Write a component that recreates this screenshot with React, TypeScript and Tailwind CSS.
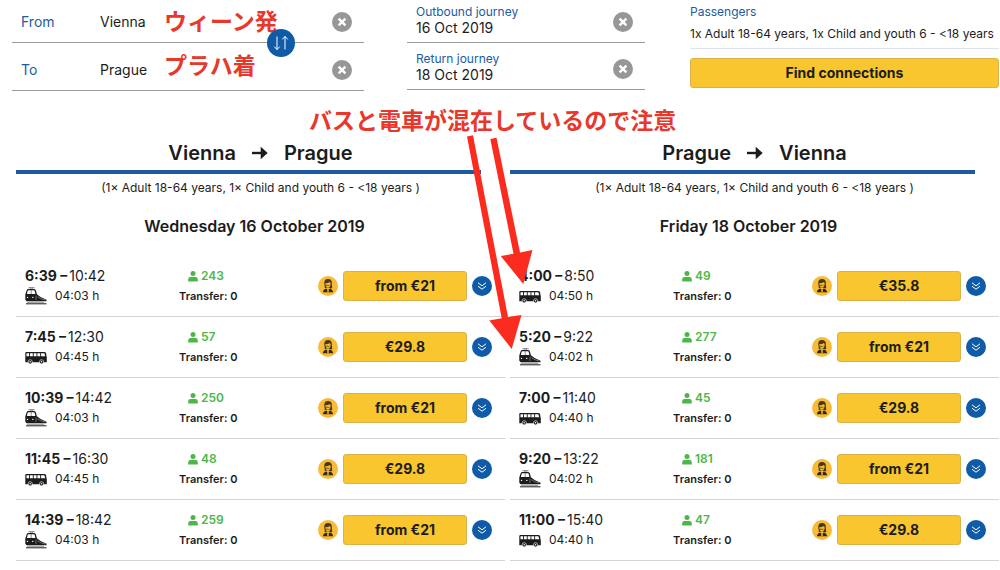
type Vehicle = 'train' | 'bus'

interface Connection {
  departure: string
  arrival: string
  duration: string
  vehicle: Vehicle
  seats: number
  price: string
}

interface Journey {
  from: string
  to: string
  date: string
  connections: Connection[]
}

const journeys: Journey[] = [
  {
    from: 'Vienna',
    to: 'Prague',
    date: 'Wednesday 16 October 2019',
    connections: [
      { departure: '6:39', arrival: '10:42', duration: '04:03 h', vehicle: 'train', seats: 243, price: 'from €21' },
      { departure: '7:45', arrival: '12:30', duration: '04:45 h', vehicle: 'bus', seats: 57, price: '€29.8' },
      { departure: '10:39', arrival: '14:42', duration: '04:03 h', vehicle: 'train', seats: 250, price: 'from €21' },
      { departure: '11:45', arrival: '16:30', duration: '04:45 h', vehicle: 'bus', seats: 48, price: '€29.8' },
      { departure: '14:39', arrival: '18:42', duration: '04:03 h', vehicle: 'train', seats: 259, price: 'from €21' },
    ],
  },
  {
    from: 'Prague',
    to: 'Vienna',
    date: 'Friday 18 October 2019',
    connections: [
      { departure: '4:00', arrival: '8:50', duration: '04:50 h', vehicle: 'bus', seats: 49, price: '€35.8' },
      { departure: '5:20', arrival: '9:22', duration: '04:02 h', vehicle: 'train', seats: 277, price: 'from €21' },
      { departure: '7:00', arrival: '11:40', duration: '04:40 h', vehicle: 'bus', seats: 45, price: '€29.8' },
      { departure: '9:20', arrival: '13:22', duration: '04:02 h', vehicle: 'train', seats: 181, price: 'from €21' },
      { departure: '11:00', arrival: '15:40', duration: '04:40 h', vehicle: 'bus', seats: 47, price: '€29.8' },
    ],
  },
]

function TrainIcon() {
  return (
    <svg viewBox="0 0 22 18" className="w-[22px] h-[18px]" aria-hidden="true">
      <path d="M3.500 .7h6M5 .7l1.500 1.300L8 .7" fill="none" stroke="#666" strokeWidth="0.800" />
      <path d="M3.400 2h5.800q1.300 0 1.700 1.500l1 3.700q3.500 3.400 9.600 5.600v1.400H1.600L.3 12.800V7.500L1.600 3.400Q2.100 2 3.400 2z" fill="#1c1c1c" />
      <path d="M3.300 3.200h5.600q.6 0 .8.800l.7 3H1.900l.7-3q.2-.8.7-.8z" fill="#fff" />
      <path d="M6.200 3.200v4" stroke="#1c1c1c" strokeWidth=".5" />
      <circle cx="2.500" cy="10.400" r=".7" fill="#fff" />
      <circle cx="7.800" cy="10.400" r=".7" fill="#fff" />
      <path d="M11 8.500v4.500M12.500 9.800q3.500 2.300 7.500 3.200" fill="none" stroke="#aaa" strokeWidth=".6" />
      <path d="M2 15.300h17" stroke="#777" strokeWidth=".8" />
      <path d="M1 16.800h20.500" stroke="#1c1c1c" strokeWidth="1" />
    </svg>
  )
}

function BusIcon() {
  return (
    <svg viewBox="0 0 22 18" className="w-[22px] h-[18px]" aria-hidden="true">
      <path d="M1.300 4h18.200q1.200 0 1.500 1.300l.8 4.300v4.700H.3V5.200Q.3 4 1.300 4z" fill="#1c1c1c" />
      <path d="M1.500 5.300h2.600v2.900H1.500zM5 5.300h2.800v2.900H5zM8.700 5.300h2.800v2.900H8.700zM12.400 5.300h2.800v2.900h-2.800zM16.100 5.300h3.300l.8 2.900h-4.100z" fill="#fff" />
      <circle cx="5.200" cy="13.800" r="2.100" fill="#1c1c1c" stroke="#fff" strokeWidth=".6" />
      <circle cx="16.600" cy="13.800" r="2.100" fill="#1c1c1c" stroke="#fff" strokeWidth=".6" />
      <circle cx="5.200" cy="13.800" r=".7" fill="#fff" />
      <circle cx="16.600" cy="13.800" r=".7" fill="#fff" />
    </svg>
  )
}

function PersonIcon() {
  return (
    <svg viewBox="0 0 10 11" className="w-[10px] h-[11px]" aria-hidden="true">
      <circle cx="5" cy="2.600" r="2.500" fill="#4cb748" />
      <path d="M.2 10.600V8.400Q.2 6 2.600 6h4.800q2.400 0 2.400 2.400v2.200z" fill="#4cb748" />
    </svg>
  )
}

function StewardIcon() {
  return (
    <svg viewBox="0 0 20 20" className="size-5 shrink-0" role="img" aria-label="Steward">
      <circle cx="10" cy="10" r="10" fill="#f8bb38" />
      <path d="M6.300 8.200Q5.700 3 10 3t3.800 4.600q.3 3 .4 4.600h-2l-1.500-.7H8.600l-1 .5H6.700Q7 10 6.300 8.200z" fill="#4a3a14" />
      <path d="M7.300 7.300q3 0 4.700-1.200.9 1 .6 2.600Q12 11.300 10 11.600 7.900 11.300 7.300 8.800z" fill="#f8bb38" />
      <path d="M7.200 9.200h2.200q1 .8 2-.1" fill="none" stroke="#4a3a14" strokeWidth=".8" />
      <path d="M4.900 16.300q.2-3 3.400-3.900L10 14.200l1.700-1.800q3.200.9 3.400 3.900z" fill="#33290f" />
      <path d="M9 13.400l1 1.200 1-1.200-.4 2.700h-1.200z" fill="#f8bb38" />
    </svg>
  )
}

function ClearButton({ label }: { label: string }) {
  return (
    <button type="button" aria-label={label} className="size-5 shrink-0 rounded-full bg-[#979797]">
      <svg viewBox="0 0 20 20" className="size-5" aria-hidden="true">
        <path d="M6.600 6.600l6.800 6.800M13.400 6.600l-6.800 6.800" stroke="#fff" strokeWidth="2.400" />
      </svg>
    </button>
  )
}

function RightArrow() {
  return (
    <svg viewBox="0 0 16 14" className="w-4 h-3.5" role="img" aria-label="to">
      <path d="M0 7h13" stroke="#1c1c1c" strokeWidth="2.400" />
      <path d="M8.700.8l7 6.200-7 6.200z" fill="#1c1c1c" />
    </svg>
  )
}

function ConnectionRow({ connection }: { connection: Connection }) {
  return (
    <li className="flex items-center h-[61px] pl-[9px] pr-[13px] border-b border-[#d4d4d4]">
      <div className="w-[154px] shrink-0">
        <p className="flex gap-0.5 text-sm leading-5">
          <span className="font-bold">{connection.departure} –</span>
          <span>{connection.arrival}</span>
        </p>
        <p className="flex items-center gap-2 text-xs leading-5">
          {connection.vehicle === 'train' ? <TrainIcon /> : <BusIcon />}
          {connection.duration}
        </p>
      </div>
      <div className="shrink-0">
        <p className="flex items-center gap-[3px] pl-[9px] text-xs leading-5 font-semibold text-[#4cb748]">
          <PersonIcon />
          {connection.seats}
        </p>
        <p className="text-[11px] leading-5 font-semibold">Transfer: 0</p>
      </div>
      <div className="ml-auto flex items-center gap-[5px]">
        <StewardIcon />
        <button type="button" className="w-[124px] h-[30px] rounded-[3px] border border-[#d9b24a] bg-[#f9c62f] text-sm font-bold">
          {connection.price}
        </button>
        <button type="button" aria-label="Show details" className="size-5 rounded-full bg-[#105ba8]">
          <svg viewBox="0 0 20 20" className="size-5" aria-hidden="true">
            <path d="M6 6.800l4 3 4-3M6 10.200l4 3 4-3" fill="none" stroke="#fff" strokeWidth="1" />
          </svg>
        </button>
      </div>
    </li>
  )
}

function JourneyColumn({ journey }: { journey: Journey }) {
  return (
    <section className="flex-1">
      <h2 className="flex items-center justify-center gap-4 h-[34px] text-xl font-semibold">
        {journey.from}
        <RightArrow />
        {journey.to}
      </h2>
      <div className="mr-6 h-1 bg-[#1c5ba3]" />
      <p className="mt-1 text-center text-xs leading-5">
        (1× Adult 18-64 years, 1× Child and youth 6 - &lt;18 years )
      </p>
      <h3 className="mt-4 mb-[18px] pr-3 text-center text-base leading-6 font-semibold">{journey.date}</h3>
      <ul>
        {journey.connections.map((connection) => (
          <ConnectionRow key={connection.departure} connection={connection} />
        ))}
      </ul>
    </section>
  )
}

export default function App() {
  return (
    <div className="relative bg-white text-[#1c1c1c] font-[Inter,'Noto_Sans_CJK_JP',sans-serif]">
      <form className="flex items-start pl-3 pr-px h-[136px]" onSubmit={(e) => e.preventDefault()}>
        <div className="relative w-[352px]">
          <div className="flex items-end h-[43px] pl-[9px] pr-3 pb-2.5 border-b border-[#9b9b9b] text-sm">
            <label htmlFor="from" className="w-[79px] shrink-0 text-[#1c5ba3]">From</label>
            <input id="from" defaultValue="Vienna" className="min-w-0 flex-1 outline-none" />
            <ClearButton label="Clear departure" />
          </div>
          <div className="flex items-end h-12 pl-[9px] pr-3 pb-2.5 border-b border-[#9b9b9b] text-sm">
            <label htmlFor="to" className="w-[79px] shrink-0 text-[#1c5ba3]">To</label>
            <input id="to" defaultValue="Prague" className="min-w-0 flex-1 outline-none" />
            <ClearButton label="Clear destination" />
          </div>
          <span className="absolute left-[152px] top-1 text-[23px] leading-9 font-bold text-[#e8382b]">ウィーン発</span>
          <span className="absolute left-[152px] top-12 text-[23px] leading-9 font-bold text-[#e8382b]">プラハ着</span>
          <button type="button" aria-label="Swap" className="absolute left-[255px] top-[29px] size-7 rounded-full bg-[#105ba8]">
            <svg viewBox="0 0 28 28" className="size-7" aria-hidden="true">
              <path d="M10 7.500v13M7.300 17.600l2.700 3 2.700-3M18 20.500v-13M15.300 10.400l2.700-3 2.700 3" fill="none" stroke="#fff" strokeWidth="1" />
            </svg>
          </button>
        </div>

        <div className="w-[238px] ml-[43px]">
          <div className="flex items-end h-[43px] pl-[9px] pr-3 pb-1.5 border-b border-[#9b9b9b]">
            <div className="min-w-0 flex-1">
              <label htmlFor="outbound" className="block text-xs leading-[17px] text-[#1c5ba3]">Outbound journey</label>
              <input id="outbound" defaultValue="16 Oct 2019" className="block w-full text-sm leading-4 outline-none" />
            </div>
            <div className="flex pb-1">
              <ClearButton label="Clear outbound journey" />
            </div>
          </div>
          <div className="flex items-end h-[47px] pl-[9px] pr-3 pb-1.5 border-b border-[#9b9b9b]">
            <div className="min-w-0 flex-1">
              <label htmlFor="return" className="block text-xs leading-[17px] text-[#1c5ba3]">Return journey</label>
              <input id="return" defaultValue="18 Oct 2019" className="block w-full text-sm leading-4 outline-none" />
            </div>
            <div className="flex pb-1">
              <ClearButton label="Clear return journey" />
            </div>
          </div>
        </div>

        <div className="flex-1 ml-[45px] pt-1">
          <p className="text-xs leading-4 text-[#1c5ba3]">Passengers</p>
          <p className="mt-1 pb-1 text-xs leading-5 whitespace-nowrap border-b border-[#dfe3ee]">
            1x Adult 18-64 years, 1x Child and youth 6 - &lt;18 years
          </p>
          <button type="submit" className="mt-[9px] w-full h-[30px] rounded-[3px] border border-[#d9b24a] bg-[#f9c62f] text-sm font-bold">
            Find connections
          </button>
        </div>
      </form>

      <main className="flex gap-[5px] pl-4 pr-px">
        {journeys.map((journey) => (
          <JourneyColumn key={journey.date} journey={journey} />
        ))}
      </main>

      <p className="absolute left-[309px] top-[103px] text-[23px] leading-9 font-bold whitespace-nowrap text-[#e8382b]">
        バスと電車が混在しているので注意
      </p>
      <svg viewBox="0 0 70 216" className="absolute left-[465px] top-[135px] w-[70px] h-[216px] pointer-events-none" aria-hidden="true">
        <path d="M2 1.500l6-1.200L43 182l13.500-2L46.700 214 24.300 185.500l12.400-2.300z" fill="#fb2c1f" />
        <path d="M25.300 4l6.200-1.300L55 117.500l12.500-2.500-9.200 34-22.600-28 12.800-2.200z" fill="#fb2c1f" />
      </svg>
    </div>
  )
}
